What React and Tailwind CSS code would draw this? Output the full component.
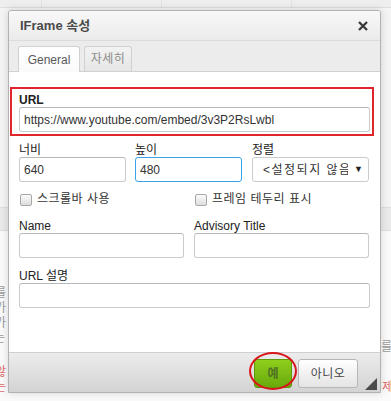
import React from "react";

const Field = ({ label, value, width, focused, bold }) => (
  <div className="flex flex-col">
    <label className={`h-[14px] leading-[14px] text-[12px] text-[#222] ${bold ? "font-bold" : ""}`}>{label}</label>
    <div
      className={`h-[25px] rounded-[3px] bg-white px-[4px] flex items-center text-[12px] text-[#333] border ${
        focused ? "border-[#3aa3ee]" : "border-[#c9cccf] border-t-[#b4b8bd]"
      } ${width}`}
    >
      {value}
    </div>
  </div>
);

const Check = ({ text }) => (
  <div className="flex items-center gap-[5px] h-[13px]">
    <span className="w-[12px] h-[12px] rounded-[2px] border border-[#a8a8a8] bg-gradient-to-b from-[#fbfbfb] to-[#dedede]" />
    <span className="text-[12px] text-[#333] leading-[13px] tracking-[0.5px]">{text}</span>
  </div>
);

const Backdrop = () => (
  <div className="flex flex-col h-full">
    <div className="h-[8px] bg-[#eeeeee] border-b border-[#dedede] flex">
      <div className="w-[42px] border-r border-[#e2e2e2]" />
      <div className="w-[120px] border-r border-[#e2e2e2]" />
      <div className="w-[130px] border-r border-[#e2e2e2]" />
    </div>
    <div className="h-[199px] bg-[#f4f4f4]" />
    <div className="h-[24px] bg-[#eaeaea] border-y border-[#dedede]" />
    <div className="flex-1 bg-[#fafafa] pt-[55px] text-[12px] leading-[15px]">
      <div className="flex justify-between text-[#9a9a9a]"><span className="-ml-[5px]">를</span><span /></div>
      <div className="flex justify-between text-[#9a9a9a]"><span className="-ml-[5px]">가</span><span /></div>
      <div className="flex justify-between text-[#9a9a9a]"><span className="-ml-[5px]">가</span><span /></div>
      <div className="flex justify-between text-[#9a9a9a]"><span className="-ml-[6px]">는</span><span /></div>
      <div className="flex justify-end text-[#9a9a9a] -mt-[6px]"><span className="-mr-[1px]">를</span></div>
      <div className="h-[10px]" />
      <div className="flex justify-between text-[#e06a6a]"><span className="-ml-[5px]">않</span><span /></div>
      <div className="flex justify-between text-[#e06a6a]"><span className="-ml-[5px]">는</span><span className="-mr-[2px]">제</span></div>
    </div>
  </div>
);

const Dialog = () => (
  <div className="absolute left-[8px] top-[10px] w-[373px] h-[383px] flex flex-col border border-[#b2b2b2] rounded-t-[3px] bg-white shadow-[0_0_8px_rgba(0,0,0,0.15)]">
    {/* title bar */}
    <div className="h-[30px] flex items-center justify-between pl-[11px] pr-[12px] rounded-t-[3px] bg-gradient-to-b from-[#f8f8f8] to-[#ebebeb] border-b border-[#dcdcdc]">
      <span className="text-[13px] font-bold text-[#4a4a4a]">IFrame 속성</span>
      <svg width="10" height="10" viewBox="0 0 10 10">
        <path d="M1 1 L9 9 M9 1 L1 9" stroke="#3a3a3a" strokeWidth="2.3" />
      </svg>
    </div>

    {/* tabs */}
    <div className="h-[31px] flex items-end gap-[4px] pl-[9px] bg-[#ececec] border-b border-[#d1d1d1]">
      <div className="h-[26px] -mb-px w-[62px] flex items-center justify-center rounded-t-[3px] border border-b-0 border-[#d1d1d1] bg-gradient-to-b from-white to-[#fafafa] text-[12px] text-[#595959]">
        General
      </div>
      <div className="h-[25px] w-[48px] flex items-center justify-center rounded-t-[3px] border border-b-0 border-[#d1d1d1] bg-gradient-to-b from-[#f2f2f2] to-[#e6e6e6] text-[12px] text-[#8a8a8a] tracking-[0.5px]">
        자세히
      </div>
    </div>

    {/* content */}
    <div className="flex-1 px-[10px] pt-[15px]">
      <div className="-ml-[9px] -mr-[4px] border-2 border-[#e0262b] pl-[7px] pr-[2px] pt-[4px] pb-[2px]">
        <Field label="URL" bold value="https://www.youtube.com/embed/3v3P2RsLwbl" />
      </div>

      <div className="flex mt-[7px]">
        <Field label="너비" value="640" width="w-[107px]" />
        <div className="ml-[9px]">
          <Field label="높이" value="480" width="w-[107px]" focused />
        </div>
        <div className="ml-[10px] flex flex-col">
          <label className="h-[14px] leading-[14px] text-[12px] text-[#222]">정렬</label>
          <div className="h-[25px] w-[117px] rounded-[3px] border border-[#c9cccf] bg-white flex items-center pl-[10px] pr-[5px] text-[12px] text-[#333]">
            <span className="w-[85px] overflow-hidden whitespace-nowrap tracking-[1.5px]">&lt;설정되지 않음&gt;</span>
            <span className="ml-auto text-[9px] text-[#222]">▼</span>
          </div>
        </div>
      </div>

      <div className="flex mt-[11px] pl-[1px]">
        <div className="w-[175px]">
          <Check text="스크롤바 사용" />
        </div>
        <Check text="프레임 테두리 표시" />
      </div>

      <div className="flex mt-[13px]">
        <Field label="Name" value="" width="w-[165px]" />
        <div className="ml-[10px]">
          <Field label="Advisory Title" value="" width="w-[175px]" />
        </div>
      </div>

      <div className="mt-[11px]">
        <Field label="URL 설명" value="" />
      </div>
    </div>

    {/* footer */}
    <div className="relative h-[40px] border-t border-[#cfcfcf] bg-gradient-to-b from-[#ececec] to-[#d2d3d2] flex justify-end items-start pt-[6px] pr-[22px] gap-[6px]">
      <div className="relative">
        <div className="h-[29px] w-[38px] rounded-[3px] border border-[#5e9a0a] bg-gradient-to-b from-[#8fcf1c] to-[#69a90c] flex items-center justify-center text-[12px] font-bold text-[#4f6f25]">
          예
        </div>
        <div className="absolute -left-[5px] -top-[7px] w-[48px] h-[38px] rounded-[50%] border-2 border-[#d9141b]" />
      </div>
      <div className="h-[29px] w-[60px] rounded-[3px] border border-[#b6b6b6] bg-gradient-to-b from-white to-[#e4e4e4] flex items-center justify-center text-[12px] text-[#474747] tracking-[0.5px]">
        아니오
      </div>
      <svg className="absolute right-[3px] bottom-[2px]" width="12" height="12" viewBox="0 0 12 12">
        <path d="M12 0 L12 12 L0 12 Z" fill="#4a4a4a" />
      </svg>
    </div>
  </div>
);

export default function App() {
  return (
    <div className="relative w-[391px] h-[401px] overflow-hidden bg-[#f6f6f6] font-['Liberation_Sans','Noto_Sans_CJK_KR',sans-serif]">
      <Backdrop />
      <Dialog />
    </div>
  );
}
